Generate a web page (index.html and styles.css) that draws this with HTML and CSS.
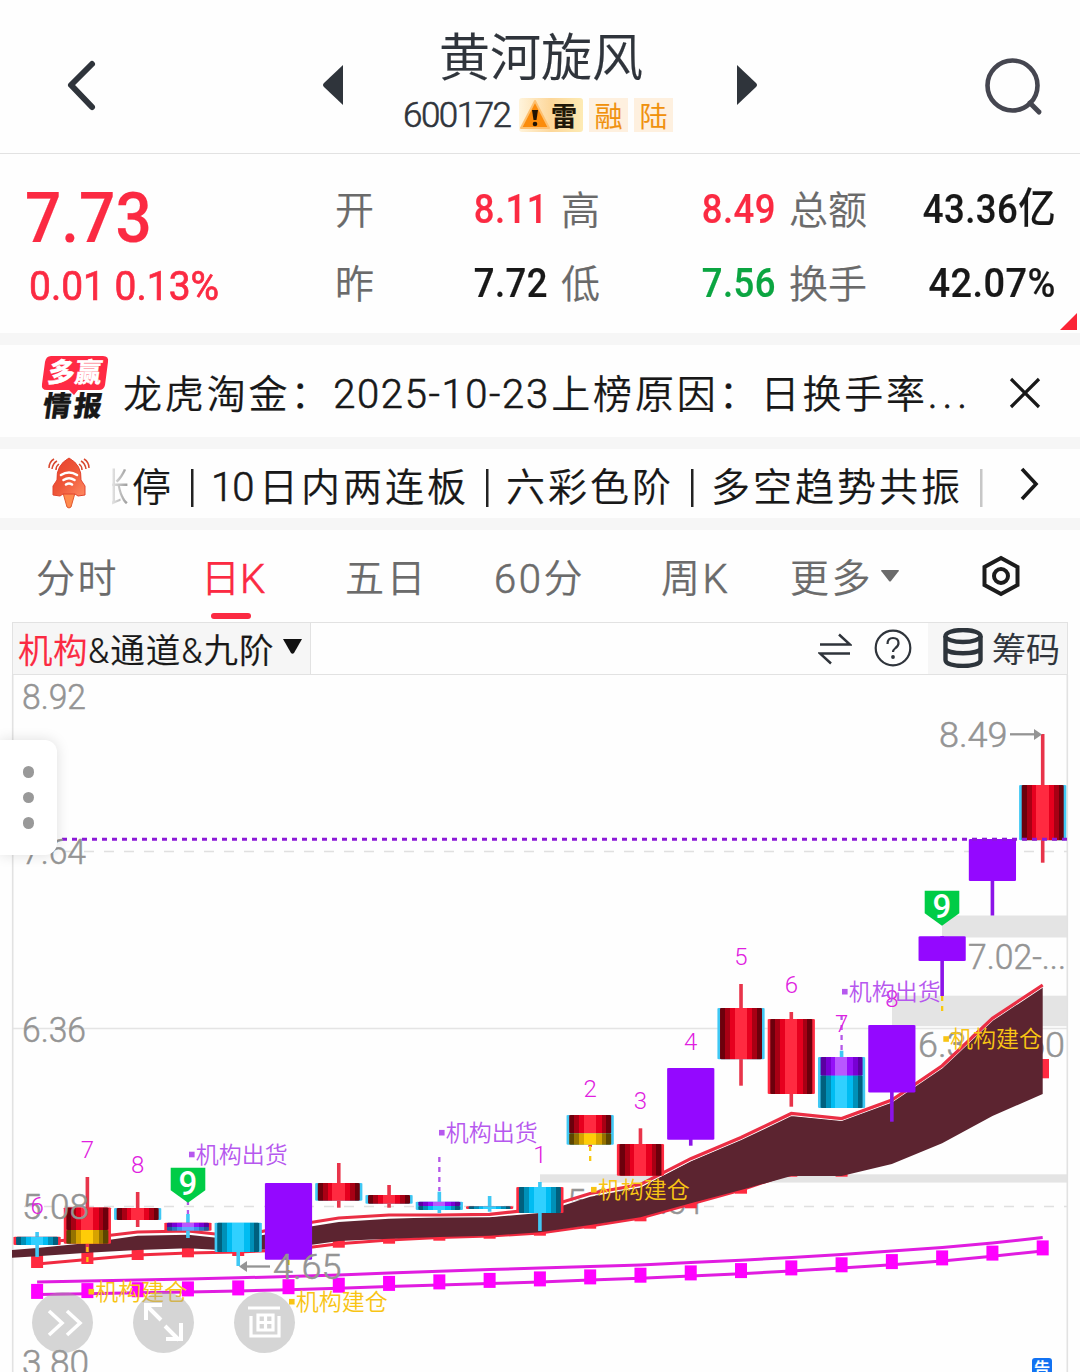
FILE: index.html
```html
<!DOCTYPE html>
<html lang="zh-CN">
<head>
<meta charset="utf-8">
<title>黄河旋风 600172</title>
<link rel="stylesheet" href="styles.css">
</head>
<body>
<header class="topbar">
  <svg class="back" width="34" height="56" viewBox="0 0 34 56"><path d="M28 7 7 28 28 50" fill="none" stroke="#2f343b" stroke-width="6" stroke-linecap="round" stroke-linejoin="round"/></svg>
  <svg class="prev" width="22" height="42" viewBox="0 0 22 42"><path d="M21 1v40L2 23q-2-2 0-4z" fill="#2f343b"/></svg>
  <div class="stock">
    <h1 class="stock-name">黄河旋风</h1>
    <div class="stock-meta">
      <span class="code">600172</span>
      <span class="tag tag-risk"><svg width="32" height="32" viewBox="0 0 32 32"><path d="M16 3 30 30H2z" fill="#fb8c0c" stroke="#fdc070" stroke-width="2" stroke-linejoin="round"/><path d="M13 12h6l-1.5 10h-3z" fill="#201303"/><circle cx="16" cy="26" r="2.3" fill="#201303"/></svg><span>雷</span></span>
      <span class="tag"><span>融</span></span>
      <span class="tag"><span>陆</span></span>
    </div>
  </div>
  <svg class="next" width="22" height="42" viewBox="0 0 22 42"><path d="M1 1v40l19-18q2-2 0-4z" fill="#2f343b"/></svg>
  <svg class="search" width="60" height="60" viewBox="0 0 60 60"><circle cx="28.500" cy="28.500" r="25" fill="none" stroke="#454650" stroke-width="4.600"/><path d="m46 46 9 9" stroke="#454650" stroke-width="5" stroke-linecap="round"/></svg>
</header>

<section class="quote">
  <div class="price">
    <div class="last din">7.73</div>
    <div class="change din">0.01 0.13%</div>
  </div>
  <div class="stats">
    <span class="lbl">开</span><span class="val up din">8.11</span>
    <span class="lbl">高</span><span class="val up din">8.49</span>
    <span class="lbl">总额</span><span class="val din">43.36<span class="unit">亿</span></span>
    <span class="lbl">昨</span><span class="val din">7.72</span>
    <span class="lbl">低</span><span class="val down din">7.56</span>
    <span class="lbl">换手</span><span class="val din">42.07%</span>
  </div>
  <svg class="corner" width="17" height="17" viewBox="0 0 17 17"><path d="M17 0v17H0z" fill="#fb2436"/></svg>
</section>

<section class="news">
  <div class="news-logo">
    <svg class="bubble" width="68" height="40" viewBox="0 0 68 40"><path d="M10 0h52q6 0 5 6l-3 23q-1 5-6 5H37l-4 5-5-5H6q-6 0-5-6L4 6q1-6 6-6z" fill="#ff2a44"/></svg>
    <span class="logo-a">多赢</span>
    <span class="logo-b">情报</span>
  </div>
  <p class="news-text">龙虎淘金：<span class="date">2025-10-23</span>上榜原因：<span class="day">日换手率</span><span class="dots">...</span></p>
  <svg class="close" width="32" height="32" viewBox="0 0 32 32"><path d="M2 2 30 30M30 2 2 30" stroke="#181818" stroke-width="3.200"/></svg>
</section>

<section class="signals">
  <svg class="rocket" width="42" height="52" viewBox="0 0 42 52">
    <defs><linearGradient id="rk" x1="0" y1="0" x2="1" y2="1"><stop offset="0" stop-color="#e8402c"/><stop offset=".5" stop-color="#ee5638"/><stop offset="1" stop-color="#ff8a62"/></linearGradient></defs>
    <path d="M15 36h12l-4 14q-2 2-4 0z" fill="#ff8b4e" stroke="#e2582f" stroke-width="1"/>
    <path d="M21 1q13 7 12 22l4 6v9l-7 1-3-2H15l-3 2-7-1v-9l4-6Q8 8 21 1z" fill="url(#rk)" stroke="#e2452f" stroke-width="1"/>
    <g fill="none" stroke="#fff" stroke-width="2.600" stroke-linecap="round"><path d="M13 18q8-5 16 0"/><path d="M15.500 23q5.500-3.500 11 0"/><path d="M18 27.500q3-2 6 0"/></g>
    <g fill="none" stroke="#d9482f" stroke-width="1.500"><path d="M6 2Q1 5 1 11M9 4Q5 6 4 12M11 7q-3 2-3 6M36 2q5 3 5 9M33 4q4 2 5 8M31 7q3 2 3 6"/></g>
  </svg>
  <div class="ticker">
    <span class="cut">涨</span><span>停</span><i></i><span class="ten">10</span><span>日内两连板</span><i></i><span>六彩色阶</span><i></i><span>多空趋势共振</span><i class="dim"></i>
  </div>
  <svg class="more" width="20" height="34" viewBox="0 0 20 34"><path d="m2 2 14 15L2 32" fill="none" stroke="#181818" stroke-width="3.600"/></svg>
</section>

<nav class="tabs">
  <a>分时</a><a class="on">日<b>K</b></a><a>五日</a><a><b>60</b>分</a><a>周<b>K</b></a>
  <a>更多<svg class="caret" width="18" height="12" viewBox="0 0 18 12"><path d="M1 0h16q2 0 0 2l-7 9q-1 1-2 0L1 2q-2-2 0-2z" fill="#6b6b6b"/></svg></a>
  <svg class="gear" width="40" height="42" viewBox="0 0 40 42"><path d="m20 3 16.500 9v18L20 39 3.500 30V12z" fill="none" stroke="#1c1c1c" stroke-width="4"/><circle cx="20" cy="21" r="7" fill="none" stroke="#1c1c1c" stroke-width="4"/></svg>
</nav>

<main class="panel">
  <div class="tools">
    <div class="indicator"><em>机构</em>&amp;通道&amp;九阶<svg width="19" height="15" viewBox="0 0 19 15"><path d="M0 0h19l-8 14q-1.500 1.500-3 0z" fill="#111"/></svg></div>
    <svg class="swap" width="34" height="32" viewBox="0 0 34 32"><path d="M2 11.500h30L21 1.500M32 20.500H2l11 10" fill="none" stroke="#2f343b" stroke-width="2.500"/></svg>
    <svg class="help" width="38" height="38" viewBox="0 0 38 38"><circle cx="19" cy="19" r="17.300" fill="none" stroke="#2f343b" stroke-width="2.200"/><path d="M13.500 15q0-6 5.500-6t5.500 5q0 3-3 5-2.500 2-2.500 4" fill="none" stroke="#2f343b" stroke-width="2.200"/><circle cx="19" cy="28" r="1.900" fill="#2f343b"/></svg>
    <div class="chips"><svg width="40" height="40" viewBox="0 0 40 40"><g fill="none" stroke="#2d343b" stroke-width="4.400"><ellipse cx="20" cy="8" rx="17.500" ry="6"/><path d="M2.500 8v24c0 8 35 8 35 0V8M2.500 20c0 7 35 7 35 0"/></g></svg>筹码</div>
  </div>
  <div class="chart">
    <svg id="kline" width="1080" height="697" viewBox="0 675 1080 697"></svg>
    <aside class="drawer"><i></i><i></i><i></i></aside>
    <div class="fabs">
      <span class="fab"><svg width="60" height="60" viewBox="0 0 60 60"><path d="m17 19 13 12-13 12M35 19l13 12-13 12" fill="none" stroke="#fff" stroke-width="3.600"/></svg></span>
      <span class="fab"><svg width="60" height="60" viewBox="0 0 60 60"><path d="M13 28V13h16M14 14l14 14M32 34l14 14M48 31v16H33" fill="none" stroke="#fff" stroke-width="4"/></svg></span>
      <span class="fab"><svg width="60" height="60" viewBox="0 0 60 60"><path d="M14 16h32M17 24v20h28V24M24 23h15v15H24zM31.500 23v15M24 30.500h15" fill="none" stroke="#fff" stroke-width="3.200"/></svg></span>
    </div>
    <span class="notice">告</span>
  </div>
</main>
<script src="chart.js"></script>
</body>
</html>
```
FILE: styles.css
```css
* { box-sizing: border-box; }
body {
  margin: 0;
  width: 1080px;
  height: 1372px;
  overflow: hidden;
  background: #fefefe;
  color: #181818;
  font-family: Roboto, "Noto Sans CJK SC", sans-serif;
  font-weight: 350;
  -webkit-text-stroke: .2px;
}
svg { display: block; flex: none; }
i, em { font-style: normal; }
.din { font-weight: 500; }

.topbar {
  display: grid;
  grid-template-columns: 64px 258px 81px 333px 249px 1fr;
  height: 154px;
  border-bottom: 1px solid #e2e2e2;
  color: #2f343b;
}
.back { grid-column: 2; margin-top: 57px; }
.prev { margin-top: 64px; }
.stock { width: 276px; }
.next { margin-top: 64px; }
.search { margin: 57px 0 0 -1px; }
.stock-name {
  margin: 27px 0 0;
  text-align: center;
  font-size: 51px;
  font-weight: 350;
  line-height: 64px;
}
.stock-meta { display: flex; align-items: center; margin-top: 7px; height: 34px; }
.code { width: 116px; font-size: 35px; letter-spacing: -1.500px; white-space: nowrap; -webkit-text-stroke: .6px; }
.tag {
  height: 34px;
  width: 39px;
  margin-right: 6px;
  background: #fef0df;
  color: #f0910c;
  font-size: 28px;
  line-height: 39px;
  text-align: center;
  flex: none;
}
.tag-risk {
  display: flex;
  width: 64px;
  color: #1f1808;
  font-size: 26px;
  font-weight: 700;
  border-radius: 3px;
  background: linear-gradient(90deg, #fff4dc, #fdd79a 50%, #fdebb4);
}

.quote { display: flex; position: relative; height: 179px; }
.price { width: 334px; padding-left: 25px; color: #fb2a42; }
.last { margin-top: 25px; font-size: 71px; line-height: 78px; transform: scaleX(.9); transform-origin: 0 0; }
.change { margin-left: 4px; font-size: 41px; line-height: 58px; font-weight: 400; transform: scaleX(.95); transform-origin: 0 0; white-space: nowrap; -webkit-text-stroke: .7px; }
.stats {
  display: grid;
  grid-template-columns: 60px 154px 73px 155px 100px 180px;
  grid-template-rows: 74px 74px;
  margin-top: 18px;
  line-height: 74px;
}
.lbl { color: #6a6a6a; font-size: 39px; padding-left: 1px; margin-top: 2px; white-space: nowrap; }
.stats .lbl:nth-child(6n+3), .stats .lbl:nth-child(6n+5) { padding-left: 13px; }
.val { text-align: right; font-size: 41px; letter-spacing: .5px; transform: scaleX(.89); transform-origin: 100% 50%; white-space: nowrap; }
.stats .val:last-child { transform: scaleX(.925); }
.unit { font-size: 42px; line-height: 0; }
.up { color: #fb2a42; }
.down { color: #0ba541; }
.corner { position: absolute; right: 3px; bottom: 3px; }

.news, .signals { display: flex; border-top: 12px solid #f6f6f6; }
.news { height: 104px; align-items: center; padding: 4px 0 0 41px; }
.news-logo { position: relative; width: 82px; height: 68px; margin-top: -6px; }
.logo-a, .logo-b { position: absolute; white-space: nowrap; font-weight: 900; transform: skewX(-8deg); }
.logo-a { left: 7px; top: 0; color: #fff; font-size: 27px; line-height: 34px; }
.logo-b { left: 2px; top: 36px; font-size: 28px; line-height: 30px; letter-spacing: 3px; }
.news-text { display: flex; margin: 3px 0 0; width: 886px; font-size: 39px; letter-spacing: 2.850px; line-height: 60px; white-space: nowrap; }
.date { font-size: 40px; letter-spacing: 1.600px; width: 218px; margin-left: 1px; -webkit-text-stroke: .6px; }
.dots { letter-spacing: 5.500px; -webkit-text-stroke: .9px; }

.signals { height: 81px; align-items: center; padding-left: 48px; }
.ticker {
  display: flex;
  width: 908px;
  margin-left: 22px;
  margin-top: 9px;
  font-size: 39px;
  letter-spacing: 3px;
  line-height: 60px;
  overflow: hidden;
  white-space: nowrap;
  align-items: center;
}
.cut { width: 20px; direction: rtl; overflow: hidden; color: transparent; -webkit-text-stroke: 0; background: linear-gradient(90deg, #e4e4e4, #888); background-clip: text; -webkit-background-clip: text; flex: none; }
.ticker i { width: 37px; height: 38px; flex: none; background: linear-gradient(#222, #222) 17px 0 / 2.500px 100% no-repeat; }
.ticker i.dim { opacity: .25; }
.ten { width: 48px; font-size: 40px; letter-spacing: -1px; -webkit-text-stroke: .6px; }
.rocket { margin-top: -2px; }

.tabs {
  display: grid;
  grid-template-columns: 166px 143px 149px 167px 129px 191px 1fr;
  border-top: 12px solid #f6f6f6;
  height: 104px;
  padding-left: 36px;
  font-size: 39px;
  letter-spacing: 2.500px;
  color: #6b6b6b;
  line-height: 99px;
}
.tabs a { position: relative; white-space: nowrap; display: flex; }
.tabs b { font-weight: 350; font-size: 40px; -webkit-text-stroke: .6px; }
.tabs .on { color: #fb2a42; letter-spacing: 0; margin-left: -1px; }
.tabs .on::after { content: ""; position: absolute; left: 10px; top: 83px; width: 40px; height: 6px; border-radius: 3px; background: #fb2a42; }
.caret { margin: 40px 0 0 8px; }
.gear { margin-top: 25px; }

.tools {
  display: flex;
  align-items: center;
  height: 53px;
  margin: 0 12px;
  border: 1px solid #e2e2e2;
}
.indicator {
  display: flex;
  align-items: center;
  width: 298px;
  height: 51px;
  padding: 0 0 2px 5px;
  background: #f6f6f6;
  border-right: 1px solid #e2e2e2;
  font-size: 34.500px;
  letter-spacing: 1px;
  white-space: nowrap;
}
.indicator em { color: #fb2a42; letter-spacing: .5px; }
.indicator svg { margin: -2px 0 0 9px; }
.swap { margin-left: 507px; }
.help { margin: -2px 0 0 22px; }
.chips { display: flex; align-items: center; gap: 9px; height: 51px; margin-left: auto; width: 139px; padding: 0 0 2px 15px; background: #f6f6f6; font-size: 34px; white-space: nowrap; color: #2f343b; }

.chart { position: relative; height: 697px; }
#kline text { font-family: Roboto, "Noto Sans CJK SC", sans-serif; }
.axis { fill: #949494; font-size: 35px; stroke: #949494; stroke-width: .5px; -webkit-text-stroke: .5px #949494; }
.count { fill: #e020e0; font-size: 24px; font-weight: 350; text-anchor: middle; -webkit-text-stroke: .4px #e020e0; }
.nine { fill: #fff; font-size: 33px; font-weight: 500; text-anchor: middle; }
.mark { font-size: 23px; }
.drawer {
  position: absolute;
  left: 0;
  top: 65px;
  width: 57px;
  height: 115px;
  border-radius: 0 12px 12px 0;
  background: #fff;
  box-shadow: 0 0 14px rgba(0, 0, 0, .13);
  display: flex;
  flex-direction: column;
  align-items: center;
  justify-content: center;
  gap: 14px;
}
.drawer i { width: 11.500px; height: 11.500px; border-radius: 50%; background: #999; }
.fabs { position: absolute; left: 32px; top: 617px; display: flex; gap: 40px; }
.fab { width: 61px; height: 61px; border-radius: 50%; background: rgba(160, 160, 160, .43); }
.notice {
  position: absolute;
  left: 1032px;
  top: 683px;
  width: 20px;
  height: 20px;
  border-radius: 3px;
  background: #1272f2;
  color: #fff;
  font-size: 16px;
  line-height: 21px;
  text-align: center;
  font-weight: 500;
}
```
FILE: chart.js
```js
(() => {
const x = i => 37.1 + 50.28 * i;
const out = [];
const add = s => out.push(s);
const rect = (l, t, w, h, f, extra = '') =>
  add(`<rect x="${l}" y="${t}" width="${w}" height="${h}" fill="${f}" ${extra}/>`);
const text = (cls, l, b, s, len, extra = '') =>
  add(`<text class="${cls}" x="${l}" y="${b}" ${len ? `textLength="${len}" lengthAdjust="spacingAndGlyphs"` : ''} ${extra}>${s}</text>`);
const line = (pts, color, w) =>
  add(`<polyline points="${pts.join(' ')}" fill="none" stroke="${color}" stroke-width="${w}"/>`);
const seg = (a, b, c, d, color, w, dash = 'none') =>
  add(`<path d="M${a} ${b}L${c} ${d}" stroke="${color}" stroke-width="${w}" stroke-dasharray="${dash}"/>`);

// Shaded cylinder fills, dark at the sides and bright in the middle
const shades = {
  red: ['#6c000c', '#a80014', '#e6001e', '#ff2a40'],
  cyan: ['#00607e', '#0090b8', '#00bcf2', '#30d0ff'],
  gold: ['#5c4600', '#957200', '#d6a300', '#ffcc08'],
  violet: ['#5a00a0', '#7800d4', '#9410f8', '#b858ff'],
  blue: ['#1c5a9a', '#2878c4', '#3c94ea', '#60a8ff']
};
add('<defs>');
for (const [name, c] of Object.entries(shades)) {
  const cuts = [[0, .12, c[0]], [.12, .24, c[1]], [.24, .35, c[2]], [.35, .64, c[3]], [.64, .77, c[2]], [.77, .88, c[1]], [.88, 1, c[0]]];
  add(`<linearGradient id="${name}">${cuts.map(([a, b, k]) => `<stop offset="${a}" stop-color="${k}"/><stop offset="${b}" stop-color="${k}"/>`).join('')}</linearGradient>`);
}
add('</defs>');

// Gap zones and grid
rect(942, 915.5, 125, 22, '#e4e4e4');
rect(892, 995.7, 175, 30.5, '#e4e4e4');
rect(540, 1174.3, 527, 8.3, '#e4e4e4');
seg(24, 851.5, 1067, 851.5, '#e0e0e0', 1.3, '10 10');
seg(13, 1028.5, 1067, 1028.5, '#e4e4e4', 1.5);
seg(24, 1206.5, 1067, 1206.5, '#e0e0e0', 1.3, '10 10');
seg(12.7, 675, 12.7, 1372, '#e2e2e2', 1.6);
seg(1067.3, 675, 1067.3, 1372, '#e2e2e2', 1.6);
text('axis', 968, 968.7, '7.02-...', 98);
text('axis', 918, 1056.7, '6.36-6.60', 147);
text('axis', 567, 1213.5, '5.29-5.31', 138);

// Lower channel
const m1 = [1282, 1281, 1280, 1279, 1277.8, 1276.5, 1275, 1273, 1271.2, 1269.5, 1268, 1266.5, 1265, 1262.6, 1260.2, 1257.5, 1254.5, 1251, 1247.5, 1243, 1237.5];
const m2 = [1294.5, 1293.7, 1292.8, 1292, 1291, 1289.8, 1288.3, 1286.5, 1285, 1283.5, 1282, 1280, 1278.3, 1276, 1273.7, 1271, 1267.9, 1264.7, 1261, 1256.2, 1251];
line(m1.map((y, i) => `${x(i)},${y}`), '#e01ce0', 3);
line(m2.map((y, i) => `${x(i)},${y}`), '#e01ce0', 3);
m2.forEach((y, i) => rect(x(i) - 6, y - 10.6, 12, 15, '#ff00ff'));

// Main trend band
const upper = [1243, 1238, 1232, 1231, 1236.5, 1226, 1218, 1215, 1215, 1214.3, 1209, 1193.5, 1184.5, 1158.7, 1137.5, 1113.5, 1118.5, 1100, 1065.7, 1018.3, 985];
const bandTop = [1248, 1243, 1235.7, 1234.7, 1240, 1230, 1222, 1218.7, 1217.3, 1217.3, 1213, 1196.7, 1187.5, 1161, 1139.5, 1115.5, 1120.5, 1102, 1067, 1019, 986];
const bandLow = [1256.3, 1252.7, 1250, 1248.3, 1251, 1248, 1241, 1238.7, 1237, 1235.7, 1232.3, 1225, 1217.3, 1203.3, 1190, 1176, 1176, 1164, 1143.3, 1116, 1094];
const lowerLine = [1264, 1259.5, 1255, 1253, 1252, 1250, 1243.7, 1240, 1237.5, 1236, 1233, 1226, 1218, 1204, 1190, 1173, 1172];
const foot = [1268, 1264, 1260, 1257.3, 1256, 1254, 1247.7, 1243.7, 1240.7, 1238.7, 1235.7, 1228.7, 1221.3, 1208.3, 1193.7, 1176.7, 1176.7];
line(lowerLine.map((y, i) => `${x(i)},${y}`), '#f02a40', 3);
foot.forEach((y, i) => rect(x(i) - 6, y - 14, 12, 14, '#ff2a40'));
rect(x(20) - 6, 1059, 12.3, 19.3, '#ff2a40');
add(`<polygon fill="#5c2430" points="12,1250 ${bandTop.map((y, i) => `${x(i)},${y}`).join(' ')} ${bandLow.map((y, i) => `${x(i)},${y}`).reverse().join(' ')} 12,1257.7"/>`);
line(upper.map((y, i) => `${x(i)},${y + 2}`), '#fff', 1.2);
line(upper.map((y, i) => `${x(i)},${y}`), '#ea2e44', 3.2);

// Candles: wick top, wick bottom, edge colour, body parts as [fill, top, bottom]
const R = '#ff2a40', C = '#40c8f4', P = '#9408ff', V = '#b458e8', G = '#f8c810';
const candles = [
  [1232, 1257, R, [['cyan', 1236.7, 1245]]],
  [1177, 1252, R, [['red', 1207.5, 1230], ['gold', 1230, 1243.7]]],
  [1192, 1227, C, [['red', 1208, 1220]]],
  [1214, 1238, R, [['violet', 1222.7, 1228], ['blue', 1227, 1230.8]]],
  [1223, 1266, C, [['cyan', 1222.7, 1252]]],
  [1183, 1259, P, [[P, 1183, 1259.7]]],
  [1163, 1207.7, C, [['red', 1183, 1200.7]]],
  [1185, 1207.7, C, [['red', 1195, 1203.7]]],
  [1191.7, 1213, C, [['violet', 1201.7, 1206], ['cyan', 1206, 1210]]],
  [1196, 1211.7, R, [['cyan', 1206.2, 1209]]],
  [1182, 1231, R, [['cyan', 1187, 1213]]],
  [1115, 1147, C, [['red', 1115, 1133.3], ['gold', 1133.3, 1144.7]]],
  [1128.3, 1175, R, [['red', 1144, 1175.7]]],
  [1068, 1145.7, P, [[P, 1068, 1139.7]]],
  [984, 1085.7, C, [['red', 1008, 1059.3]]],
  [1012, 1106.7, R, [['red', 1019, 1094]]],
  [1050.7, 1100, C, [['violet', 1057, 1075.7], ['cyan', 1075.7, 1108]]],
  [1025, 1121.7, P, [[P, 1025, 1092.5]]],
  [936, 996, P, [[P, 936.3, 961]]],
  [839, 915.5, P, [[P, 839, 881]]],
  [734, 862.7, C, [['red', 785, 840.3]]]
];
candles.forEach(([t, b, edge, parts], i) => {
  const c = x(i), solid = edge === P;
  const first = parts[0], last = parts[parts.length - 1];
  const cool = last[0] === 'cyan' || last[0] === 'blue';
  const wick = solid ? '#8c14e8' : cool ? '#40c8f4' : '#e8344a';
  rect(c - 1.8, t, 3.6, b - t, wick);
  rect(c - 23.6, first[1], 47.2, last[2] - first[1], edge, 'rx="1.5" ry=".8"');
  if (!solid) parts.forEach(([f, y1, y2]) => rect(c - 21, y1, 42, y2 - y1, `url(#${f})`, 'rx="1.5" ry=".8"'));
});
seg(x(1), 1247, x(1), 1264, G, 2.3, '5 5');
seg(x(3), 1200, x(3), 1214, V, 2.3, '5 5');
seg(x(5), 1260, x(5), 1273, G, 2.3, '5 5');
seg(x(8), 1157, x(8), 1191, V, 2.3, '5 5');
seg(x(11), 1146, x(11), 1162, G, 2.3, '5 5');
seg(x(16), 1015, x(16), 1050, V, 2.3, '5 5');
seg(x(18), 996, x(18), 1011, G, 2.3, '5 5');
seg(62, 839.2, 1067, 839.2, '#8c1ad8', 3, '5 5');

// Axis values and extremes
[['8.92', 708.7], ['7.64', 863.5], ['6.36', 1041.5], ['5.08', 1218.7], ['3.80', 1374.5]].forEach(([s, y], i) => text('axis', 22, y, s, i < 3 ? 64 : 67));
text('axis', 939, 747, '8.49', 68.5);
seg(1010, 734.3, 1036, 734.3, '#949494', 2.3);
add('<path d="M1034 729v11l8-5.500z" fill="#949494"/>');
text('axis', 273, 1279, '4.65', 68.5);
seg(246, 1266.5, 270, 1266.5, '#949494', 2.3);
add('<path d="M247 1261v11l-8-5.500z" fill="#949494"/>');

// Nine-step counts
[[0, 6, 1213.5], [1, 7, 1158], [2, 8, 1173], [10, 1, 1163], [11, 2, 1097.3], [12, 3, 1109.3], [13, 4, 1050.3], [14, 5, 965.3], [15, 6, 993.3], [16, 7, 1032], [17, 8, 1007.3]]
  .forEach(([i, n, y]) => text('count', x(i), y, n));
[[188, 1167.7], [942, 890.7]].forEach(([c, y]) => {
  add(`<path d="M${c - 17.3} ${y}h34.6v22.5l-17.3 12.5-17.3-12.5z" fill="#00cc46"/>`);
  text('nine', c, y + 27, 9);
});

// Institution marks
[['机构出货', 189, 1154.5, '#b658ee'], ['机构出货', 439, 1132.7, '#b658ee'], ['机构出货', 842, 991.7, '#b658ee'],
 ['机构建仓', 88.5, 1291.7, '#f8c414'], ['机构建仓', 289, 1301.7, '#f8c414'], ['机构建仓', 591, 1189.7, '#f8c414'], ['机构建仓', 943.3, 1039, '#f8c414']]
  .forEach(([s, l, y, f]) => {
    rect(l, y - 2.8, 5.6, 5.6, f);
    text('mark', l + 6.8, y + 8, s, 92, `fill="${f}"`);
  });

document.getElementById('kline').innerHTML = out.join('');
})();
```
